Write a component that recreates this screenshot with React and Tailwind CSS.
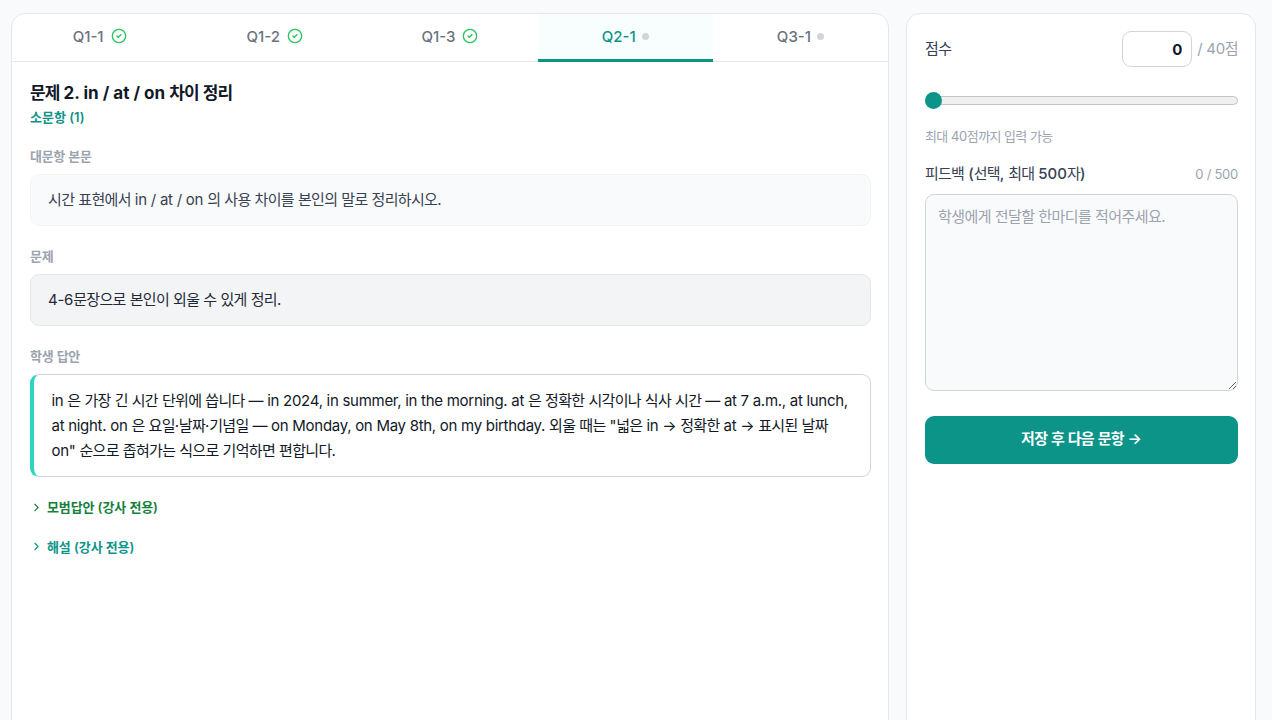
import { CircleCheck, ChevronRight } from 'lucide-react'

const tabs = [
  { label: 'Q1-1', done: true },
  { label: 'Q1-2', done: true },
  { label: 'Q1-3', done: true },
  { label: 'Q2-1', active: true },
  { label: 'Q3-1' },
]

const answerLines = [
  'in 은 가장 긴 시간 단위에 씁니다 — in 2024, in summer, in the morning. at 은 정확한 시각이나 식사 시간 — at 7 a.m., at lunch,',
  'at night. on 은 요일·날짜·기념일 — on Monday, on May 8th, on my birthday. 외울 때는 "넓은 in → 정확한 at → 표시된 날짜',
  'on" 순으로 좁혀가는 식으로 기억하면 편합니다.',
]

// Hangul runs are set a little tighter than the Latin text around them
function Ko({ children, hangul = 'tracking-[-0.045em]' }) {
  return (
    <span>
      {children.split(/([가-힣]+)/).map((part, i) =>
        i % 2 ? <span key={i} className={hangul}>{part}</span> : part
      )}
    </span>
  )
}

const small = 'tracking-[-0.022em]'

function Section({ title, className, children }) {
  return (
    <section className="mt-[21px]">
      <h3 className="text-[13px] leading-[18px] font-semibold text-[#9ca3af]"><Ko hangul={small}>{title}</Ko></h3>
      <div className={`mt-[9.2px] rounded-[9px] border py-[12.4px] text-[15px] leading-[25.2px] whitespace-nowrap ${className}`}>
        {children}
      </div>
    </section>
  )
}

export default function App() {
  return (
    <div className="h-screen w-[1272px] overflow-hidden bg-[#f9fafb] pl-[11px] pt-[13px] flex gap-[17px] font-['Inter','Noto_Sans_CJK_KR',sans-serif] text-[#111827]">
      {/* ===== QUESTION ===== */}
      <main className="w-[878px] h-[760px] shrink-0 rounded-[14px] border border-[#e5e7eb] bg-white overflow-hidden">
        <nav className="flex h-[48px] border-b border-[#e5e7eb]">
          {tabs.map((tab) => (
            <button
              key={tab.label}
              className={`flex-1 -mb-px flex items-center justify-center border-b-[3px] text-[15px] font-medium ${
                tab.active ? 'border-[#0d9488] bg-[#f8fefe] text-[#0d9488]' : 'border-transparent text-[#6b7280]'
              }`}
            >
              <span className="pt-[2px]">{tab.label}</span>
              {tab.done
                ? <CircleCheck size={16} className="mb-px ml-[7px] text-[#22c55e]" />
                : <span className="ml-[6px] size-[7px] rounded-full bg-[#d1d5db]" />}
            </button>
          ))}
        </nav>

        <div className="pl-[18px] pr-[17px] pt-[19px]">
          <h2 className="text-[17px] leading-[24px] font-bold whitespace-nowrap"><Ko hangul="tracking-[-0.05em]">문제 2. in / at / on 차이 정리</Ko></h2>
          <p className="mt-[2px] text-[13px] leading-[20px] font-semibold text-[#0d9488]"><Ko hangul="tracking-[0em]">소문항 (1)</Ko></p>

          <div className="-mt-[1.3px]">
            <Section title="대문항 본문" className="border-[#f3f4f6] bg-[#f9fafb] px-[17px] tracking-[-0.016em] text-[#374151]">
              <Ko>시간 표현에서 in / at / on 의 사용 차이를 본인의 말로 정리하시오.</Ko>
            </Section>
            <Section title="문제" className="border-[#e5e7eb] bg-[#f3f4f6] px-[17px] tracking-[-0.016em] text-[#1f2937]">
              <Ko>4-6문장으로 본인이 외울 수 있게 정리.</Ko>
            </Section>
            <Section title="학생 답안" className="border-[#d1d5db] border-l-4 border-l-[#2dd4bf] bg-white px-[17.5px] tracking-[-0.019em] text-[#111827]">
              {answerLines.map((line) => <p key={line}><Ko>{line}</Ko></p>)}
            </Section>
          </div>

          <div className="mt-[20.8px] flex items-center gap-[4px] text-[13px] leading-[20px] font-semibold text-[#15803d]">
            <ChevronRight size={13} /><Ko hangul="tracking-[-0.01em]">모범답안 (강사 전용)</Ko>
          </div>
          <div className="mt-[19.2px] flex items-center gap-[4px] text-[13px] leading-[20px] font-semibold text-[#0d9488]">
            <ChevronRight size={13} /><Ko hangul="tracking-[-0.01em]">해설 (강사 전용)</Ko>
          </div>
        </div>
      </main>

      {/* ===== GRADING ===== */}
      <aside className="w-[350px] h-[760px] shrink-0 rounded-[14px] border border-[#e5e7eb] bg-white pl-[18px] pr-[17px] pt-[17px] flex flex-col">
        <div className="flex items-center">
          <label className="text-[15px] font-medium text-[#374151]"><Ko hangul="font-normal tracking-[-0.045em]">점수</Ko></label>
          <input
            defaultValue="0"
            className="ml-auto h-[36px] w-[70px] rounded-[9px] border border-[#d1d5db] px-[9px] text-right text-[15px] font-bold"
          />
          <span className="ml-[5px] text-[15px] tracking-[-0.02em] text-[#9ca3af]"><Ko>/ 40점</Ko></span>
        </div>
        <input
          type="range"
          min="0"
          max="40"
          defaultValue="0"
          className="mt-[29px] mb-[4px] h-[9px] w-full shrink-0 appearance-none rounded-full border border-[#c4c4c4] bg-[#efefef] [&::-webkit-slider-thumb]:-ml-px [&::-webkit-slider-thumb]:size-[17px] [&::-webkit-slider-thumb]:appearance-none [&::-webkit-slider-thumb]:rounded-full [&::-webkit-slider-thumb]:bg-[#0d9488]"
        />
        <p className="mt-[17px] text-[13px] leading-[20px] tracking-[-0.025em] text-[#9ca3af]"><Ko hangul="tracking-[-0.052em]">최대 40점까지 입력 가능</Ko></p>
        <div className="mt-[17px] flex items-center justify-between leading-[22px]">
          <span className="text-[15px] font-medium text-[#374151]"><Ko hangul="font-normal tracking-[-0.05em]">피드백 (선택, 최대 500자)</Ko></span>
          <span className="text-[13px] tracking-[-0.02em] text-[#9ca3af]">0 / 500</span>
        </div>
        <textarea
          placeholder="학생에게 전달할 한마디를 적어주세요."
          className="mt-[9px] h-[197px] w-full shrink-0 rounded-[9px] border border-[#d1d5db] bg-[#f9fafb] px-[12px] py-[9px] text-[15px] leading-[25px] tracking-[-0.036em] placeholder:text-[#9ca3af]"
        />
        <button className="mt-[24.5px] h-[48px] w-full shrink-0 rounded-[9px] bg-[#0d9488] text-[15px] font-semibold text-white">
          <Ko hangul="tracking-[-0.05em]">저장 후 다음 문항 →</Ko>
        </button>
      </aside>
    </div>
  )
}
